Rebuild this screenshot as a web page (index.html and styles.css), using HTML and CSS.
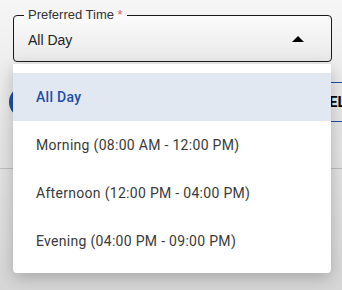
FILE: index.html
```html
<!DOCTYPE html>
<html lang="en">
<head>
  <meta charset="UTF-8">
  <meta name="viewport" content="width=device-width, initial-scale=1.0">
  <title>Preferred Time</title>
  <link rel="stylesheet" href="styles.css">
</head>
<body>

  <div class="field">
    <span class="field-label">Preferred Time <span class="req">*</span></span>
    <div class="field-value">All Day</div>
    <span class="caret"></span>
  </div>

  <!-- stuff behind the open menu -->
  <div class="behind-row">
    <span class="avatar"></span>
    <button class="ghost-btn">EL</button>
  </div>
  <div class="rule"></div>

  <!-- open dropdown -->
  <ul class="menu">
    <li class="menu-item selected">All Day</li>
    <li class="menu-item">Morning (08:00 AM - 12:00 PM)</li>
    <li class="menu-item">Afternoon (12:00 PM - 04:00 PM)</li>
    <li class="menu-item">Evening (04:00 PM - 09:00 PM)</li>
  </ul>

</body>
</html>
```

FILE: styles.css
```css
* {
  margin: 0;
  padding: 0;
  box-sizing: border-box;
}

body {
  width: 342px;
  height: 290px;
  overflow: hidden;
  position: relative;
  background: linear-gradient(#f6f6f6, #e6e6e6 40%, #d6d6d6);
  font-family: 'Liberation Sans', Arial, sans-serif;
}

.field {
  position: relative;
  margin: 15px 10px 0 13px;
  height: 47px;
  border: 1px solid #1a1a1a;
  border-radius: 4px;
  background: linear-gradient(#fbfbfb, #e9e9e9);
  display: flex;
  align-items: center;
  padding: 0 14px;
}

.field-label {
  position: absolute;
  top: -9px;
  left: 10px;
  padding: 0 4px;
  font-size: 13px;
  line-height: 16px;
  color: #333;
  background: linear-gradient(transparent 8px, #fafafa 8px);
}

.field-label .req {
  color: #e65c5c;
}

.field-value {
  flex: 1;
  font-size: 14px;
  color: #222;
  padding-top: 2px;
}

.caret {
  width: 0;
  height: 0;
  border-left: 6px solid transparent;
  border-right: 6px solid transparent;
  border-bottom: 6px solid #000;
  margin-right: 13px;
}

.behind-row {
  display: flex;
  justify-content: space-between;
  align-items: center;
  margin-top: 20px;
  height: 40px;
  padding-left: 9px;
}

.avatar {
  width: 32px;
  height: 32px;
  border-radius: 50%;
  background: #1e4fa0;
}

.ghost-btn {
  width: 32px;
  height: 40px;
  padding-left: 18px;
  text-align: left;
  white-space: nowrap;
  background: transparent;
  border: 1px solid #1e4fa0;
  border-right: none;
  border-radius: 4px 0 0 4px;
  font-family: Roboto, sans-serif;
  font-weight: bold;
  font-size: 15px;
  color: #000;
}

.rule {
  margin-top: 46px;
  height: 1px;
  background: #bdbdbd;
}

.menu {
  position: absolute;
  top: 64px;
  left: 13px;
  width: 318px;
  list-style: none;
  background: #fff;
  border-radius: 0 0 4px 4px;
  padding: 9px 0 8px;
  box-shadow: 0 5px 16px rgba(0, 0, 0, 0.22);
  font-family: Roboto, sans-serif;
}

.menu-item {
  height: 48px;
  line-height: 48px;
  padding-left: 23px;
  font-size: 14px;
  letter-spacing: 0.3px;
  color: #3a3a3a;
}

.menu-item.selected {
  background: #e1e8f2;
  color: #1e50a2;
  font-weight: 500;
}
```
